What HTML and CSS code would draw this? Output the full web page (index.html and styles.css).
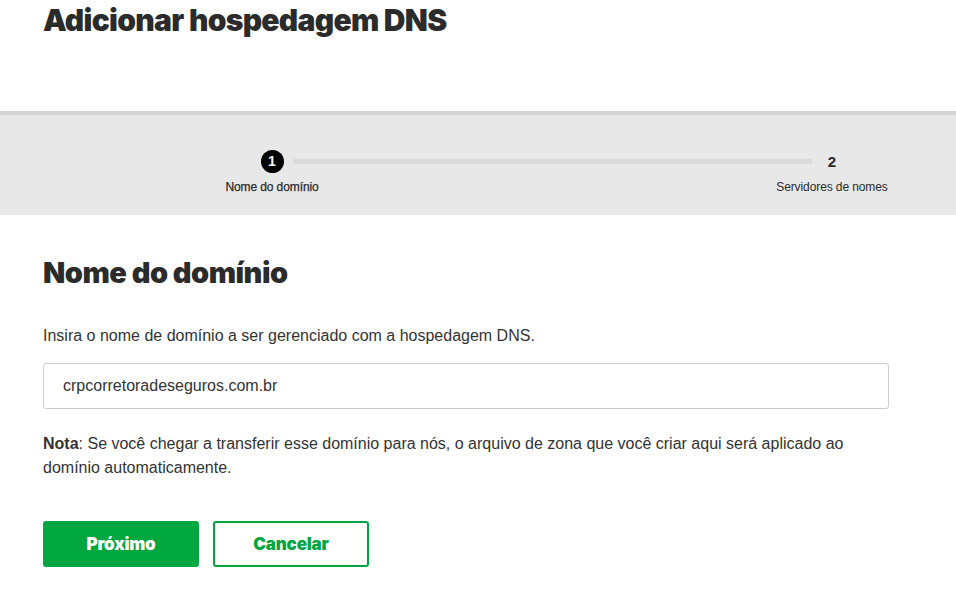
FILE: index.html
```html
<!DOCTYPE html>
<html lang="pt-BR">
<head>
<meta charset="utf-8">
<title>Adicionar hospedagem DNS</title>
<link rel="stylesheet" href="styles.css">
</head>
<body>
<header class="page-head">
  <h1 class="page-title">Adicionar hospedagem DNS</h1>
</header>
<section class="stepper-band">
  <div class="stepper">
    <div class="step-marker"><span class="step-circle">1</span></div>
    <div class="step-line"></div>
    <div class="step-marker"><span class="step-num">2</span></div>
    <div class="step-label step-label-active">Nome do domínio</div>
    <div></div>
    <div class="step-label">Servidores de nomes</div>
  </div>
</section>
<main class="content">
  <h2 class="section-title">Nome do domínio</h2>
  <p class="intro">Insira o nome de domínio a ser gerenciado com a hospedagem DNS.</p>
  <div class="field">crpcorretoradeseguros.com.br</div>
  <p class="note"><strong>Nota</strong>: Se você chegar a transferir esse domínio para nós, o arquivo de zona que você criar aqui será aplicado ao domínio automaticamente.</p>
  <div class="actions">
    <button class="btn btn-primary" type="button">Próximo</button>
    <button class="btn btn-outline" type="button">Cancelar</button>
  </div>
</main>
</body>
</html>
```

FILE: styles.css
```css
* { box-sizing: border-box; }
html, body { margin: 0; padding: 0; background: #fff; }
body {
  font-family: "Liberation Sans", Arial, sans-serif;
  color: #333;
  width: 956px;
  height: 607px;
  overflow: hidden;
}
.page-head {
  height: 111px;
  padding: 0 0 0 43px;
}
.page-title {
  margin: 0;
  font-family: Inter, "Noto Sans", sans-serif;
  font-weight: 900;
  font-size: 30px;
  line-height: 40px;
  letter-spacing: -0.7px;
  color: #2b2b2b;
}
.stepper-band {
  border-top: 4px solid #d4d4d4;
  background: #e8e8e8;
  height: 104px;
  padding: 35px 0 0 212px;
}
.stepper {
  display: grid;
  grid-template-columns: 120px 1fr 120px;
  width: 680px;
  row-gap: 6px;
}
.step-marker {
  display: flex;
  justify-content: center;
  align-items: center;
  height: 23px;
  position: relative;
  z-index: 1;
}
.step-circle {
  width: 23px;
  height: 23px;
  border-radius: 50%;
  background: #000;
  color: #fff;
  font-weight: 700;
  font-size: 14px;
  line-height: 23px;
  text-align: center;
}
.step-num {
  font-weight: 700;
  font-size: 15px;
  color: #2b2b2b;
}
.step-line {
  height: 5px;
  background: #dadada;
  align-self: center;
  margin: 0 -40px 0 -39px;
}
.step-label {
  font-size: 12px;
  line-height: 16px;
  text-align: center;
  color: #2b2b2b;
  white-space: nowrap;
  letter-spacing: -0.1px;
}
.step-label-active { -webkit-text-stroke: 0.25px #2b2b2b; }
.content {
  padding: 40px 67px 0 43px;
}
.section-title {
  margin: 0;
  font-family: Inter, "Noto Sans", sans-serif;
  font-weight: 900;
  font-size: 29px;
  line-height: 36px;
  letter-spacing: -0.5px;
  color: #2b2b2b;
}
.intro {
  margin: 32px 0 0;
  font-size: 16px;
  line-height: 25px;
}
.field {
  margin-top: 15px;
  height: 46px;
  border: 1px solid #cccccc;
  border-radius: 3px;
  padding: 0 19px;
  display: flex;
  align-items: center;
  font-size: 16px;
  color: #333;
}
.note {
  margin: 23px 0 0;
  font-size: 16px;
  line-height: 24px;
}
.note strong { font-weight: 700; }
.actions {
  margin-top: 41px;
  display: flex;
  gap: 14px;
}
.btn {
  width: 156px;
  height: 46px;
  border-radius: 3px;
  font-family: Inter, "Noto Sans", sans-serif;
  font-weight: 900;
  font-size: 17px;
  letter-spacing: -0.2px;
  cursor: pointer;
}
.btn-primary {
  background: #00a63f;
  border: 2px solid #00a63f;
  color: #fff;
}
.btn-outline {
  background: #fff;
  border: 2px solid #00a63f;
  color: #00a63f;
}
```
